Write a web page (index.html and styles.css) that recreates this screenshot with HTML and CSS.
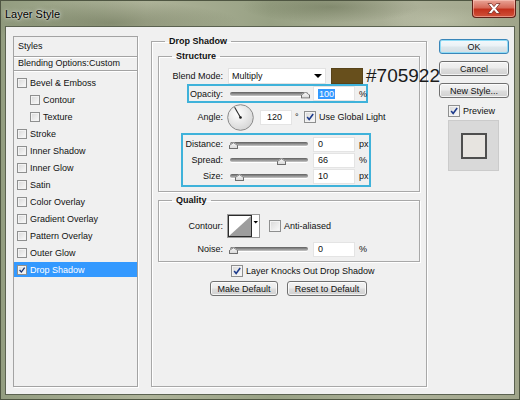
FILE: index.html
```html
<!doctype html>
<html lang="en">
<head>
<meta charset="utf-8">
<title>Layer Style</title>
<link rel="stylesheet" href="styles.css">
</head>
<body>
<div class="window">
	<div class="titlebar">
		<span class="title">Layer Style</span>
		<span class="close">
			<svg width="14" height="11" viewBox="0 0 14 11"><path d="M1 0.5 L4.5 0.5 L7 3.6 L9.5 0.5 L13 0.5 L8.9 5.5 L13 10.5 L9.5 10.5 L7 7.4 L4.5 10.5 L1 10.5 L5.1 5.5 Z" fill="#fff" stroke="#6a1d14" stroke-width="0.7"/></svg>
		</span>
	</div>

	<div class="client">
		<div class="styles-panel">
			<div class="head">Styles</div>
			<div class="head sub">Blending Options:Custom</div>
			<ul class="effects">
				<li><span class="cb sm"></span>Bevel &amp; Emboss</li>
				<li class="indent"><span class="cb sm"></span>Contour</li>
				<li class="indent"><span class="cb sm"></span>Texture</li>
				<li><span class="cb sm"></span>Stroke</li>
				<li><span class="cb sm"></span>Inner Shadow</li>
				<li><span class="cb sm"></span>Inner Glow</li>
				<li><span class="cb sm"></span>Satin</li>
				<li><span class="cb sm"></span>Color Overlay</li>
				<li><span class="cb sm"></span>Gradient Overlay</li>
				<li><span class="cb sm"></span>Pattern Overlay</li>
				<li><span class="cb sm"></span>Outer Glow</li>
				<li class="selected"><span class="cb sm on"><svg viewBox="0 0 10 10"><path d="M2 5 L4.2 7.6 L8.3 2" fill="none" stroke="#15306e" stroke-width="1.6"/></svg></span>Drop Shadow</li>
			</ul>
		</div>

		<fieldset class="group main">
			<legend>Drop Shadow</legend>

			<fieldset class="group structure">
				<legend>Structure</legend>

				<div class="row blend-row">
					<span class="lbl">Blend Mode:</span>
					<span class="select">Multiply<span class="arrow"></span></span>
					<span class="swatch"></span>
					<span class="hex">#705922</span>
				</div>

				<div class="mark opacity">
					<div class="row">
						<span class="lbl">Opacity:</span>
						<span class="slider"><span class="thumb" style="left:71px"></span></span>
						<span class="field"><span class="sel">100</span></span>
						<span class="unit">%</span>
					</div>
				</div>

				<div class="row angle-row">
					<span class="lbl">Angle:</span>
					<svg class="dial" width="27" height="27" viewBox="0 0 27 27">
						<defs>
							<radialGradient id="dialFill" cx="40%" cy="35%" r="70%">
								<stop offset="0" stop-color="#ffffff"/>
								<stop offset="1" stop-color="#d4d4d4"/>
							</radialGradient>
						</defs>
						<circle cx="13.5" cy="13.5" r="12.8" fill="url(#dialFill)" stroke="#8a8a8a"/>
						<line x1="13.5" y1="13.5" x2="7.6" y2="3.2" stroke="#2a2a2a" stroke-width="1.1"/>
						<circle cx="13.5" cy="13.5" r="1.3" fill="#1a1a1a"/>
					</svg>
					<span class="field short">120</span>
					<span class="deg">°</span>
					<span class="cb on"><svg viewBox="0 0 12 12"><path d="M2.6 6 L5 9 L9.8 2.4" fill="none" stroke="#1c3a8c" stroke-width="1.9"/></svg></span>
					<span class="cb-text">Use Global Light</span>
				</div>

				<div class="mark dist">
					<div class="row">
						<span class="lbl">Distance:</span>
						<span class="slider"><span class="thumb" style="left:-1px"></span></span>
						<span class="field">0</span>
						<span class="unit">px</span>
					</div>
					<div class="row">
						<span class="lbl">Spread:</span>
						<span class="slider"><span class="thumb" style="left:47px"></span></span>
						<span class="field">66</span>
						<span class="unit">%</span>
					</div>
					<div class="row">
						<span class="lbl">Size:</span>
						<span class="slider"><span class="thumb" style="left:5px"></span></span>
						<span class="field">10</span>
						<span class="unit">px</span>
					</div>
				</div>
			</fieldset>

			<fieldset class="group quality">
				<legend>Quality</legend>

				<div class="row contour-row">
					<span class="lbl">Contour:</span>
					<svg class="contour" width="33" height="24" viewBox="0 0 33 24">
						<rect x="0.5" y="0.5" width="32" height="23" fill="#fff" stroke="#9a9a9a"/>
						<rect x="1.5" y="1.5" width="23" height="21" fill="#fff" stroke="#2b2b2b"/>
						<polygon points="2,22 24,2 24,22" fill="#9d9d9d"/>
						<polygon points="26.5,7 31,7 28.75,9.5" fill="#000"/>
					</svg>
					<span class="cb anti"></span>
					<span class="cb-text">Anti-aliased</span>
				</div>

				<div class="row noise-row">
					<span class="lbl">Noise:</span>
					<span class="slider"><span class="thumb" style="left:-1px"></span></span>
					<span class="field">0</span>
					<span class="unit">%</span>
				</div>
			</fieldset>

			<div class="row knocks">
				<span class="cb on"><svg viewBox="0 0 12 12"><path d="M2.6 6 L5 9 L9.8 2.4" fill="none" stroke="#1c3a8c" stroke-width="1.9"/></svg></span>
				<span class="cb-text">Layer Knocks Out Drop Shadow</span>
			</div>

			<div class="row defaults">
				<span class="btn make">Make Default</span>
				<span class="btn reset">Reset to Default</span>
			</div>
		</fieldset>

		<div class="actions">
			<span class="btn ok">OK</span>
			<span class="btn cancel">Cancel</span>
			<span class="btn newstyle">New Style...</span>
			<div class="preview-check">
				<span class="cb on"><svg viewBox="0 0 12 12"><path d="M2.6 6 L5 9 L9.8 2.4" fill="none" stroke="#1c3a8c" stroke-width="1.9"/></svg></span>
				<span class="cb-text">Preview</span>
			</div>
			<div class="preview-box"><div class="preview-square"></div></div>
		</div>
	</div>
</div>
</body>
</html>
```

FILE: styles.css
```css
* {
	box-sizing: border-box;
}

body {
	margin: 0;
	font-family: "Liberation Sans", Arial, sans-serif;
	font-size: 9px;
	color: #111;
}

/* window frame, glass tinted by the photo behind it */
.window {
	width: 520px;
	height: 400px;
	display: flex;
	flex-direction: column;
	background:
		radial-gradient(ellipse 130px 22px at 110px 22px, rgba(70, 80, 50, 0.35), transparent),
		radial-gradient(ellipse 90px 16px at 330px 6px, rgba(60, 70, 40, 0.3), transparent),
		radial-gradient(ellipse 60px 14px at 440px 20px, rgba(200, 205, 180, 0.45), transparent),
		linear-gradient(90deg, #939d80, #aeb399 28%, #98a184 52%, #adb199 78%, #a0a58a);
	border: 1px solid #4f5642;
}

.titlebar {
	height: 25px;
	display: flex;
	align-items: center;
	padding-left: 4px;
}

.title {
	font-size: 11px;
	color: #000;
	text-shadow: 0 0 5px rgba(255, 255, 255, 0.9), 0 0 2px rgba(255, 255, 255, 0.7);
}

.close {
	margin-left: auto;
	margin-right: 3px;
	align-self: flex-start;
	width: 44px;
	height: 18px;
	margin-top: -1px;
	display: flex;
	align-items: center;
	justify-content: center;
	border: 1px solid #5e2119;
	border-top: none;
	border-radius: 0 0 4px 4px;
	background: linear-gradient(#e9a497 0%, #d66a59 45%, #c2301c 55%, #d0513a 100%);
	box-shadow: inset 0 0 0 1px rgba(255, 210, 200, 0.5);
}

.client {
	margin: 0 4px;
	height: 369px;
	background: #f0f0f0;
	border: 1px solid #5b6250;
	display: flex;
	align-items: stretch;
	padding: 9px 0 7px 7px;
}

/* left list of effects */
.styles-panel {
	width: 125px;
	border: 1px solid #a3a3a3;
	box-shadow: 1px 1px 0 #fff;
}

.head {
	height: 20px;
	line-height: 19px;
	padding-left: 4px;
	border-bottom: 1px solid #a3a3a3;
	box-shadow: 0 1px 0 #fff;
}

.head.sub {
	height: 14px;
	line-height: 13px;
}

.effects {
	list-style: none;
	margin: 0;
	padding: 4px 0 0;
}

.effects li {
	height: 15px;
	margin-bottom: 2px;
	display: flex;
	align-items: center;
	padding-left: 3px;
}

.effects li.indent {
	padding-left: 16px;
}

.effects li .cb {
	margin-right: 3px;
}

.effects li.selected {
	background: #3399ff;
	color: #fff;
}

/* checkboxes */
.cb {
	width: 12px;
	height: 12px;
	flex: none;
	display: inline-flex;
	border: 1px solid #8e8f8f;
	background: linear-gradient(135deg, #d8d8d8, #fbfbfb);
	box-shadow: inset 0 0 0 1px #f3f3f3;
}

.cb.sm {
	width: 10px;
	height: 10px;
}

.cb svg {
	width: 100%;
	height: 100%;
}

.cb-text {
	margin-left: 3px;
	white-space: nowrap;
}

/* group boxes */
.group {
	margin: 0;
	min-width: 0;
	border: 1px solid #a8a8a8;
	box-shadow: inset 1px 1px 0 #fff, 1px 1px 0 #fff;
}

.group legend {
	font-weight: bold;
	line-height: 11px;
	padding: 0 4px;
}

.main {
	width: 276px;
	margin-left: 13px;
	padding: 4px 6px 0;
}

.main > legend {
	margin-left: 7px;
}

.structure > legend,
.quality > legend {
	margin-left: 13px;
}

.structure {
	padding: 0 0 4px;
}

.quality {
	margin-top: 3px;
	padding: 0 0 4px;
}

.row {
	display: flex;
	align-items: center;
	white-space: nowrap;
}

.row > * {
	flex: none;
}

.lbl {
	width: 64px;
	text-align: right;
}

.blend-row {
	height: 16px;
	margin-top: 6px;
}

.select {
	width: 98px;
	height: 16px;
	margin-left: 5px;
	padding-left: 3px;
	display: flex;
	align-items: center;
	background: #fff;
	border: 1px solid #e2e2e2;
}

.arrow {
	margin-left: auto;
	margin-right: 3px;
	border-left: 4px solid transparent;
	border-right: 4px solid transparent;
	border-top: 4px solid #000;
}

.swatch {
	width: 32px;
	height: 16px;
	margin-left: 5px;
	background: #674f1c;
	border: 1px solid #57431a;
}

.hex {
	margin-left: 3px;
	font-size: 19px;
	line-height: 16px;
	color: #1b1b1b;
	position: relative;
}

/* cyan annotation frames */
.mark {
	border: 2px solid #3fb2da;
}

.mark.opacity {
	width: 181px;
	margin-left: 28px;
}

.mark.opacity .row {
	height: 15px;
}

.mark.opacity .lbl {
	width: 34px;
}

.mark.dist {
	width: 190px;
	margin-left: 22px;
	margin-top: 2px;
	padding: 1px 0;
}

.mark.dist .row {
	height: 16px;
}

.mark.dist .lbl {
	width: 40px;
}

.slider {
	position: relative;
	width: 78px;
	height: 4px;
	margin-left: 7px;
	border-radius: 2px;
	background: linear-gradient(#5f5f5f, #9a9a9a 60%, #c9c9c9);
	box-shadow: 0 1px 0 #fff;
}

.thumb {
	position: absolute;
	top: 0;
	width: 9px;
	height: 7px;
	background: linear-gradient(#fdfdfd, #d4d4d4);
	clip-path: polygon(50% 0, 100% 45%, 100% 100%, 0 100%, 0 45%);
}

.thumb::before {
	content: "";
	position: absolute;
	inset: 0;
	background: #6e6e6e;
	clip-path: polygon(50% 0, 100% 45%, 100% 100%, 0 100%, 0 45%, 11% 50%, 11% 86%, 89% 86%, 89% 50%, 50% 14%, 11% 50%, 0 45%);
}

.field {
	width: 42px;
	height: 15px;
	margin-left: 5px;
	padding-left: 4px;
	display: flex;
	align-items: center;
	background: #fff;
	border: 1px solid #e4e4e4;
}

.field.short {
	width: 32px;
	margin-left: 6px;
	padding-left: 6px;
}

.sel {
	background: #3399ff;
	color: #fff;
	padding: 0 1px;
}

.unit {
	margin-left: 4px;
}

.angle-row {
	height: 28px;
}

.dial {
	margin-left: 4px;
}

.deg {
	margin-left: 3px;
	width: 6px;
}

.angle-row .cb {
	margin-left: 3px;
}

.contour-row {
	height: 24px;
	margin-top: 8px;
}

.contour {
	margin-left: 4px;
}

.cb.anti {
	margin-left: 9px;
}

.noise-row {
	height: 16px;
	margin-top: 3px;
}

.knocks {
	height: 13px;
	margin-top: 2px;
	padding-left: 73px;
}

.defaults {
	margin-top: 4px;
}

/* push buttons */
.btn {
	height: 15px;
	display: flex;
	align-items: center;
	justify-content: center;
	border: 1px solid #707070;
	border-radius: 3px;
	background: linear-gradient(#f3f3f3 0%, #ebebeb 48%, #dddddd 52%, #d1d1d1 100%);
	box-shadow: inset 0 0 0 1px rgba(255, 255, 255, 0.75);
}

.btn.make {
	width: 68px;
	margin-left: 52px;
}

.btn.reset {
	width: 80px;
	margin-left: 9px;
}

.actions {
	width: 70px;
	margin-left: 12px;
	display: flex;
	flex-direction: column;
}

.btn.ok {
	margin-top: 3px;
	border-color: #3a86b9;
	box-shadow: inset 0 0 0 1px #8fdcf6;
	background: linear-gradient(#f4f9fc 0%, #eaf1f5 48%, #dde7ec 52%, #d3dde3 100%);
}

.btn.cancel {
	margin-top: 7px;
}

.btn.newstyle {
	margin-top: 7px;
}

.preview-check {
	display: flex;
	align-items: center;
	margin: 6px 0 0 9px;
	height: 13px;
}

.preview-box {
	width: 51px;
	height: 51px;
	margin: 3px 0 0 9px;
	background: #d9d9d9;
	border: 1px solid #cbcbcb;
	display: flex;
	align-items: center;
	justify-content: center;
}

.preview-square {
	width: 26px;
	height: 26px;
	border: 2px solid #4e4e4e;
	background: #e7e4e0;
}
```
